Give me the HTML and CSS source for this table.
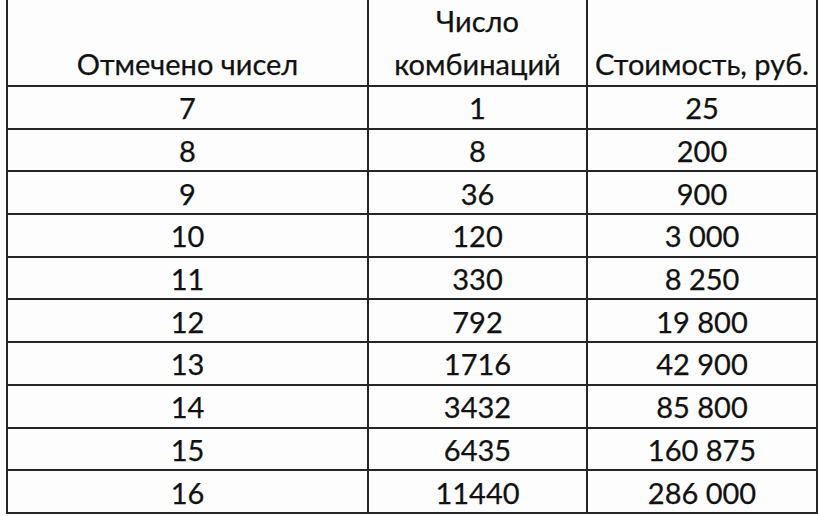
FILE: index.html
```html
<!DOCTYPE html>
<html lang="ru">
<head>
<meta charset="utf-8">
<link rel="stylesheet" href="styles.css">
</head>
<body>
<div class="grid">
  <div class="cell head">Отмечено чисел</div>
  <div class="cell head">Число<br>комбинаций</div>
  <div class="cell head">Стоимость, руб.</div>

  <div class="cell">7</div><div class="cell">1</div><div class="cell">25</div>
  <div class="cell">8</div><div class="cell">8</div><div class="cell">200</div>
  <div class="cell">9</div><div class="cell">36</div><div class="cell">900</div>
  <div class="cell">10</div><div class="cell">120</div><div class="cell">3 000</div>
  <div class="cell">11</div><div class="cell">330</div><div class="cell">8 250</div>
  <div class="cell">12</div><div class="cell">792</div><div class="cell">19 800</div>
  <div class="cell">13</div><div class="cell">1716</div><div class="cell">42 900</div>
  <div class="cell">14</div><div class="cell">3432</div><div class="cell">85 800</div>
  <div class="cell">15</div><div class="cell">6435</div><div class="cell">160 875</div>
  <div class="cell">16</div><div class="cell">11440</div><div class="cell">286 000</div>
</div>
</body>
</html>
```

FILE: styles.css
```css
html, body {
  margin: 0;
  padding: 0;
  background: #fdfdfd;
}
.grid {
  margin-left: 6px;
  width: 810px;
  display: grid;
  grid-template-columns: 361px 219px 230px;
  grid-template-rows: 87px repeat(10, 42.7px);
  border-left: 2px solid #262626;
  font-family: Lato, "Noto Sans", sans-serif;
  font-size: 29px;
  color: #111111;
  -webkit-text-stroke: 0.25px #111111;
}
.cell {
  box-sizing: border-box;
  border-right: 2px solid #262626;
  border-bottom: 2px solid #262626;
  display: flex;
  align-items: center;
  justify-content: center;
  text-align: center;
  line-height: 43px;
  padding-top: 1px;
}
.head {
  align-items: flex-end;
  padding-top: 0;
  padding-bottom: 0;
}
```
